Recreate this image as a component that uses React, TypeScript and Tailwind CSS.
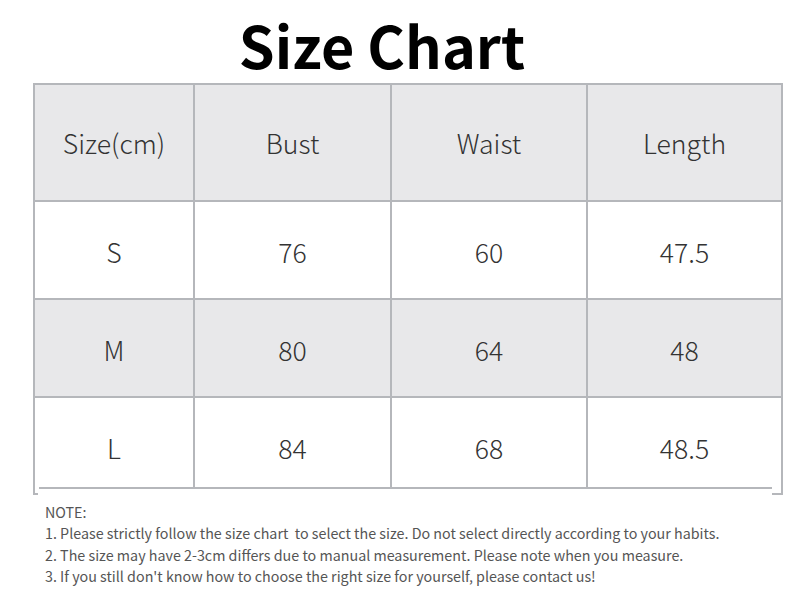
import React from 'react';

const headers = ['Size(cm)', 'Bust', 'Waist', 'Length'];

const rows = [
  ['S', '76', '60', '47.5'],
  ['M', '80', '64', '48'],
  ['L', '84', '68', '48.5'],
];

const notes = [
  'NOTE:',
  '1. Please strictly follow the size chart  to select the size. Do not select directly according to your habits.',
  '2. The size may have 2-3cm differs due to manual measurement. Please note when you measure.',
  "3. If you still don't know how to choose the right size for yourself, please contact us!",
];

const cols = 'grid grid-cols-[158px_197px_196px_195px]';

export default function App() {
  return (
    <div
      className="w-[800px] h-[600px] bg-white overflow-hidden"
      style={{ fontFamily: '"Noto Sans CJK SC", "Noto Sans", sans-serif' }}
    >
      <div className="h-[83px] flex items-center justify-center pr-[36px] pt-[6px]">
        <h1 className="text-[57.5px] font-bold text-black leading-none">Size Chart</h1>
      </div>

      <div className="ml-[33px] w-[750px] border-x-2 border-t-2 border-[#b5b7bb]">
        <div className={`${cols} h-[117px] bg-[#e8e8ea] border-b-2 border-[#b5b7bb]`}>
          {headers.map((h, i) => (
            <div
              key={h}
              className={`flex items-center justify-center text-[26.6px] font-light text-[#333] ${i > 0 ? 'border-l-2 border-[#b5b7bb]' : ''}`}
            >
              {h}
            </div>
          ))}
        </div>

        {rows.map((r, ri) => (
          <div
            key={r[0]}
            className={`${cols} ${ri === 2 ? 'h-[89px]' : 'h-[98px] border-b-2 border-[#b5b7bb]'} ${ri === 1 ? 'bg-[#e8e8ea]' : 'bg-white'}`}
          >
            {r.map((c, i) => (
              <div
                key={i}
                className={`flex items-center justify-center text-[26.6px] font-light text-[#333] ${i > 0 ? 'border-l-2 border-[#b5b7bb]' : ''} ${ri === 2 ? 'pt-[10px]' : 'pt-[3px]'}`}
              >
                {c}
              </div>
            ))}
          </div>
        ))}

        <div className="ml-[4px] mr-[9px] h-[2px] bg-[#b5b7bb]" />
        <div className="h-[6px] flex justify-between">
          <div className="w-[3px] border-b-2 border-[#b5b7bb]" />
          <div className="w-[9px] border-b-2 border-[#b5b7bb]" />
        </div>
      </div>

      <div className="ml-[45px] mt-[6px] text-[14.3px] leading-[21.3px] text-[#555]">
        {notes.map((n) => (
          <p key={n} className="whitespace-pre">
            {n}
          </p>
        ))}
      </div>
    </div>
  );
}
